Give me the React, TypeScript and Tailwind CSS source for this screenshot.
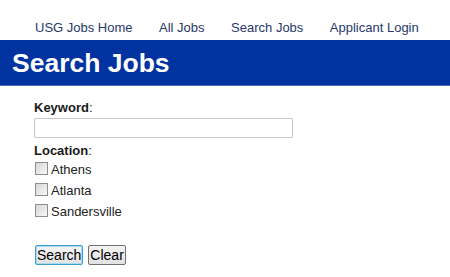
import React from "react";

const locations = ["Athens", "Atlanta", "Sandersville"];

export default function App() {
  return (
    <div className="w-[450px] h-[277px] bg-white overflow-hidden font-['Liberation_Sans',Arial,sans-serif] text-[#1a1a1a]">
      <nav className="flex gap-[26.5px] pl-[35px] pt-[20px] h-[40px] text-[13px] leading-[15px] text-[#28386b]">
        <a href="#">USG Jobs Home</a>
        <a href="#">All Jobs</a>
        <a href="#">Search Jobs</a>
        <a href="#">Applicant Login</a>
      </nav>
      <div className="h-[46px] bg-[#0033a0] border-b border-[#4f6fc6] flex items-center pl-[12px]">
        <h1 className="text-[26.5px] leading-[30px] font-bold text-white">Search Jobs</h1>
      </div>
      <form className="pl-[34px] pt-[14px] text-[13px] leading-[15px]">
        <label className="block">
          <span className="font-bold">Keyword</span>:
        </label>
        <input
          type="text"
          className="block mt-[3px] w-[259px] h-[20px] border border-[#c6c6c6] rounded-[2px] bg-white outline-none"
        />
        <label className="block mt-[5px]">
          <span className="font-bold">Location</span>:
        </label>
        <div className="flex flex-col">
          {locations.map((loc) => (
            <label key={loc} className="flex items-center h-[21px] pl-[1px]">
              <input
                type="checkbox"
                className="appearance-none m-0 w-[13px] h-[13px] border border-[#8e8e8e] bg-linear-to-br from-[#d6d6d6] to-[#f8f8f8]"
              />
              <span className="ml-[3px] mt-[2px] text-[#222]">{loc}</span>
            </label>
          ))}
        </div>
        <div className="flex gap-[5px] mt-[24px] pl-[1px]">
          <button
            type="button"
            className="h-[20px] px-[1px] text-[14px] leading-[16px] border border-[#3c9fd0] rounded-[2px] bg-linear-to-b from-[#f4f4f4] to-[#e2e2e2] shadow-[inset_0_0_0_1px_#a9dcf2] text-black"
          >
            Search
          </button>
          <button
            type="button"
            className="h-[20px] px-[1px] text-[14px] leading-[16px] border border-[#707070] rounded-[2px] bg-linear-to-b from-[#f4f4f4] to-[#e2e2e2] text-black"
          >
            Clear
          </button>
        </div>
      </form>
    </div>
  );
}
